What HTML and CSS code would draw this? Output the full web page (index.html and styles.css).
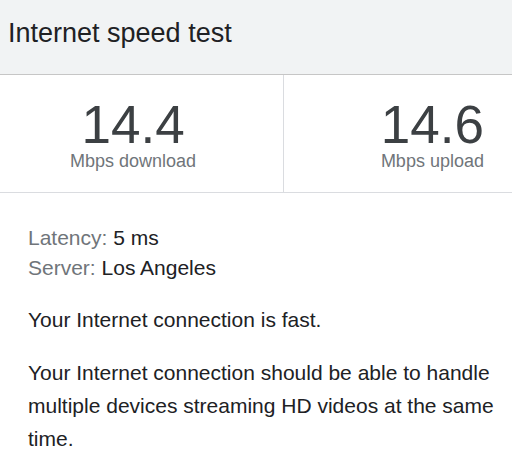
FILE: index.html
```html
<!DOCTYPE html>
<html>
<head>
<meta charset="utf-8">
<link rel="stylesheet" href="styles.css">
</head>
<body>
<div class="card">
  <div class="header">
    <div class="title">Internet speed test</div>
  </div>
  <div class="stats">
    <div class="cell cell-left">
      <div class="stat">
        <div class="num">14.4</div>
        <div class="unit">Mbps download</div>
      </div>
    </div>
    <div class="cell cell-right">
      <div class="stat">
        <div class="num">14.6</div>
        <div class="unit">Mbps upload</div>
      </div>
    </div>
  </div>
  <div class="info">
    <div class="meta">
      <div class="meta-row"><span class="label">Latency:</span> 5 ms</div>
      <div class="meta-row"><span class="label">Server:</span> Los Angeles</div>
    </div>
    <p class="para">Your Internet connection is fast.</p>
    <p class="para">Your Internet connection should be able to handle multiple devices streaming HD videos at the same time.</p>
  </div>
</div>
</body>
</html>
```
FILE: styles.css
```css
html, body {
  margin: 0;
  padding: 0;
  background: #ffffff;
}
body {
  font-family: "Liberation Sans", Arial, sans-serif;
  color: #202124;
}
.header {
  height: 74px;
  background: #f1f3f4;
  border-bottom: 1px solid #c6c6c6;
  display: flex;
  align-items: flex-start;
}
.title {
  font-size: 27px;
  line-height: 30px;
  padding: 18px 0 0 8px;
  color: #202124;
}
.stats {
  display: flex;
  height: 117px;
  border-bottom: 1px solid #dadce0;
}
.cell {
  display: flex;
  align-items: flex-start;
  padding-top: 28px;
  box-sizing: border-box;
}
.cell-left {
  width: 284px;
  border-right: 1px solid #dadce0;
  padding-left: 70px;
}
.cell-right {
  flex: 1;
  justify-content: flex-end;
  padding-right: 28px;
}
.stat {
  text-align: center;
}
.num {
  font-size: 53px;
  line-height: 44px;
  color: #3c4043;
}
.unit {
  font-size: 18px;
  line-height: 28px;
  color: #70757a;
}
.info {
  padding: 30px 6px 0 28px;
  font-size: 21px;
}
.meta {
  margin-bottom: 1px;
}
.meta-row {
  line-height: 30px;
}
.label {
  color: #70757a;
}
.para {
  margin: 20px 0 0 0;
  line-height: 33px;
}
```
